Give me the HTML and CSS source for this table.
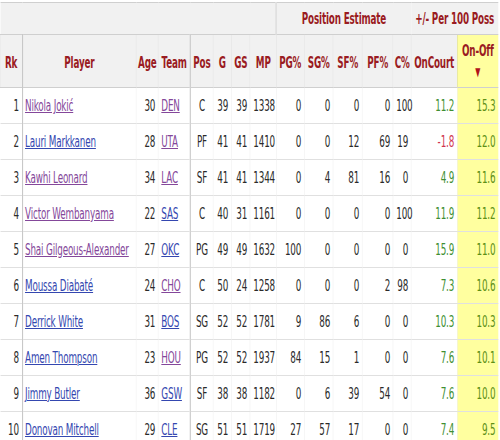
FILE: index.html
```html
<!DOCTYPE html>
<html>
<head>
<meta charset="utf-8">
<link rel="stylesheet" href="styles.css">
</head>
<body>
<div class="viewport">
<div class="frame">
<table class="stats">
<colgroup>
<col class="c-rk"><col class="c-player"><col class="c-age"><col class="c-team"><col class="c-pos"><col class="c-g"><col class="c-gs"><col class="c-mp"><col class="c-pg"><col class="c-sg"><col class="c-sf"><col class="c-pf"><col class="c-c"><col class="c-on"><col class="c-onoff">
</colgroup>
<thead>
<tr class="over">
<th colspan="8" class="blank"></th>
<th colspan="5">Position Estimate</th>
<th colspan="2">+/- Per 100 Poss</th>
</tr>
<tr class="heads">
<th class="sep">Rk</th><th>Player</th><th>Age</th><th class="sep">Team</th><th>Pos</th><th>G</th><th>GS</th><th>MP</th><th>PG%</th><th>SG%</th><th>SF%</th><th>PF%</th><th>C%</th><th>OnCourt</th><th class="sorted">On-Off<br><span class="arrow">▼</span></th>
</tr>
</thead>
<tbody>
<tr><td class="rk">1</td><td class="pl"><a class="v">Nikola Jokić</a></td><td>30</td><td class="tm"><a class="v">DEN</a></td><td class="pos">C</td><td>39</td><td>39</td><td>1338</td><td>0</td><td>0</td><td>0</td><td>0</td><td>100</td><td class="pos-v">11.2</td><td class="oo">15.3</td></tr>
<tr><td class="rk">2</td><td class="pl"><a>Lauri Markkanen</a></td><td>28</td><td class="tm"><a class="v">UTA</a></td><td class="pos">PF</td><td>41</td><td>41</td><td>1410</td><td>0</td><td>0</td><td>12</td><td>69</td><td>19</td><td class="neg-v">-1.8</td><td class="oo">12.0</td></tr>
<tr><td class="rk">3</td><td class="pl"><a class="v">Kawhi Leonard</a></td><td>34</td><td class="tm"><a class="v">LAC</a></td><td class="pos">SF</td><td>41</td><td>41</td><td>1344</td><td>0</td><td>4</td><td>81</td><td>16</td><td>0</td><td class="pos-v">4.9</td><td class="oo">11.6</td></tr>
<tr><td class="rk">4</td><td class="pl"><a class="v">Victor Wembanyama</a></td><td>22</td><td class="tm"><a>SAS</a></td><td class="pos">C</td><td>40</td><td>31</td><td>1161</td><td>0</td><td>0</td><td>0</td><td>0</td><td>100</td><td class="pos-v">11.9</td><td class="oo">11.2</td></tr>
<tr><td class="rk">5</td><td class="pl"><a class="v">Shai Gilgeous-Alexander</a></td><td>27</td><td class="tm"><a>OKC</a></td><td class="pos">PG</td><td>49</td><td>49</td><td>1632</td><td>100</td><td>0</td><td>0</td><td>0</td><td>0</td><td class="pos-v">15.9</td><td class="oo">11.0</td></tr>
<tr><td class="rk">6</td><td class="pl"><a>Moussa Diabaté</a></td><td>24</td><td class="tm"><a class="v">CHO</a></td><td class="pos">C</td><td>50</td><td>24</td><td>1258</td><td>0</td><td>0</td><td>0</td><td>2</td><td>98</td><td class="pos-v">7.3</td><td class="oo">10.6</td></tr>
<tr><td class="rk">7</td><td class="pl"><a>Derrick White</a></td><td>31</td><td class="tm"><a>BOS</a></td><td class="pos">SG</td><td>52</td><td>52</td><td>1781</td><td>9</td><td>86</td><td>6</td><td>0</td><td>0</td><td class="pos-v">10.3</td><td class="oo">10.3</td></tr>
<tr><td class="rk">8</td><td class="pl"><a>Amen Thompson</a></td><td>23</td><td class="tm"><a class="v">HOU</a></td><td class="pos">PG</td><td>52</td><td>52</td><td>1937</td><td>84</td><td>15</td><td>1</td><td>0</td><td>0</td><td class="pos-v">7.6</td><td class="oo">10.1</td></tr>
<tr><td class="rk">9</td><td class="pl"><a>Jimmy Butler</a></td><td>36</td><td class="tm"><a>GSW</a></td><td class="pos">SF</td><td>38</td><td>38</td><td>1182</td><td>0</td><td>6</td><td>39</td><td>54</td><td>0</td><td class="pos-v">7.6</td><td class="oo">10.0</td></tr>
<tr><td class="rk">10</td><td class="pl"><a>Donovan Mitchell</a></td><td>29</td><td class="tm"><a>CLE</a></td><td class="pos">SG</td><td>51</td><td>51</td><td>1719</td><td>27</td><td>57</td><td>17</td><td>0</td><td>0</td><td class="pos-v">7.4</td><td class="oo">9.5</td></tr>
</tbody>
</table>
</div>
</div>
</body>
</html>
```

FILE: styles.css
```css
html, body {
  margin: 0;
  background: #ffffff;
  overflow: hidden;
}

.viewport {
  width: 500px;
  height: 440px;
  overflow: hidden;
}

.frame {
  width: 906px;
  padding-top: 2px;
  transform: scaleX(0.55);
  transform-origin: 0 0;
}

.stats {
  border-collapse: collapse;
  table-layout: fixed;
  width: 905.5px;
  font-family: "DejaVu Sans", Verdana, sans-serif;
  font-size: 16px;
  letter-spacing: -0.3px;
  color: #2a2a2a;
}

.c-rk { width: 40px; }
.c-player { width: 207.3px; }
.c-age { width: 40px; }
.c-team { width: 58.2px; }
.c-pos { width: 41.8px; }
.c-g { width: 32.7px; }
.c-gs { width: 34.5px; }
.c-mp { width: 47.3px; }
.c-pg { width: 50.9px; }
.c-sg { width: 52.7px; }
.c-sf { width: 52.7px; }
.c-pf { width: 56.4px; }
.c-c { width: 32.7px; }
.c-on { width: 83.6px; }
.c-onoff { width: 74.5px; }

.stats th {
  background: #f1f1f1;
  color: #9a1b22;
  font-weight: bold;
  padding: 0 2px;
  white-space: nowrap;
  text-align: center;
  vertical-align: middle;
  border-top: 1px solid #cfcfcf;
  border-bottom: 1px solid #cfcfcf;
}

.over th {
  height: 31px;
}

.over th.blank {
  border-right: 2px solid #d6d6d6;
}

.heads th {
  height: 49px;
  padding-top: 3px;
  border-left: 1px solid #e2e2e2;
}

.heads th.sep {
  border-right: 2px solid #c8c8c8;
}

.heads th.sorted {
  background: #ffff9f;
  border-left: 1px solid #d8d8a0;
  line-height: 20px;
  padding-top: 0;
}

.arrow {
  font-size: 12px;
  color: #b0121b;
}

.stats td {
  height: 35px;
  padding: 0 5px;
  text-align: right;
  white-space: nowrap;
  border-bottom: 1px solid #e0e0e0;
  border-left: 1px solid #efefef;
  vertical-align: middle;
}

.stats td.rk {
  border-right: 2px solid #c8c8c8;
  border-left: none;
}

.stats td.pl {
  text-align: left;
  padding-left: 4px;
}

.stats td.tm {
  text-align: left;
  border-right: 2px solid #c8c8c8;
}

.stats td.pos {
  text-align: center;
}

.stats a {
  color: #3447b0;
  text-decoration: underline;
}

.stats a.v {
  color: #84479a;
}

.stats td.pos-v {
  color: #3f8f33;
}

.stats td.neg-v {
  color: #d0364f;
}

.stats td.oo {
  background: #ffff9f;
  color: #5d8f16;
}
```
